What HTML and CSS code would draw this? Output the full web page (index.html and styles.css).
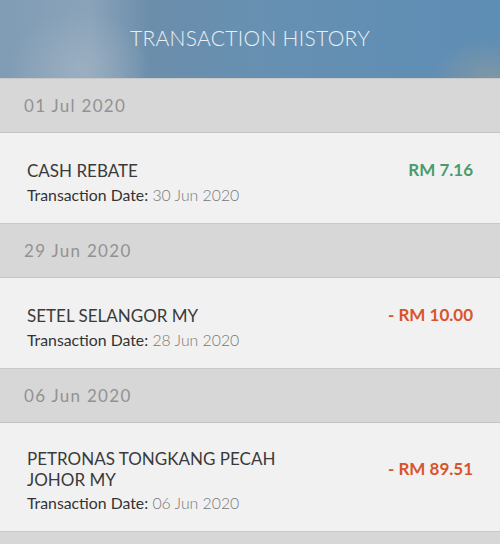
FILE: index.html
```html
<!DOCTYPE html>
<html lang="en">
<head>
    <meta charset="UTF-8">
    <meta name="viewport" content="width=device-width, initial-scale=1.0">
    <title>Transaction History</title>
    <link rel="stylesheet" href="styles.css">
</head>
<body>
<header class="top-bar">
    <h1>TRANSACTION HISTORY</h1>
</header>

<div class="history">
    <div class="day">01 Jul 2020</div>
    <div class="txn">
        <div class="txn-head">
            <div class="txn-title">CASH REBATE</div>
            <div class="amount credit">RM 7.16</div>
        </div>
        <div class="txn-date"><span>Transaction Date:</span> 30 Jun 2020</div>
    </div>

    <div class="day">29 Jun 2020</div>
    <div class="txn">
        <div class="txn-head">
            <div class="txn-title">SETEL SELANGOR MY</div>
            <div class="amount debit">- RM 10.00</div>
        </div>
        <div class="txn-date"><span>Transaction Date:</span> 28 Jun 2020</div>
    </div>

    <div class="day">06 Jun 2020</div>
    <div class="txn">
        <div class="txn-head">
            <div class="txn-title">PETRONAS TONGKANG PECAH JOHOR MY</div>
            <div class="amount debit">- RM 89.51</div>
        </div>
        <div class="txn-date"><span>Transaction Date:</span> 06 Jun 2020</div>
    </div>

    <div class="day"></div>
</div>
</body>
</html>
```

FILE: styles.css
```css
body {
    font-family: Lato, "Open Sans", sans-serif;
    background-color: #d7d7d7;
    margin: 0;
    padding: 0;
    height: 544px;
    overflow: hidden;
}

.top-bar {
    height: 78px;
    box-sizing: border-box;
    padding-bottom: 4px;
    display: flex;
    justify-content: center;
    align-items: center;
    background:
        radial-gradient(ellipse 70px 60px at 80px 70px, rgba(170, 185, 200, 0.55), rgba(170, 185, 200, 0)),
        radial-gradient(ellipse 60px 40px at 490px 78px, rgba(160, 160, 150, 0.5), rgba(160, 160, 150, 0)),
        linear-gradient(90deg, #7f9cb5 0%, #8aa3b9 18%, #6b8eab 30%, #6690b2 55%, #5e8db5 100%);
}

.top-bar h1 {
    margin: 0;
    font-weight: 300;
    font-size: 21px;
    color: #e9eff5;
    letter-spacing: 0.3px;
}

.day {
    height: 53px;
    padding: 0 24px;
    display: flex;
    align-items: center;
    background-color: #d7d7d7;
    border-top: 1px solid #c9c9c9;
    border-bottom: 1px solid #c4c4c4;
    color: #929292;
    font-size: 17px;
    letter-spacing: 1.3px;
}

.txn {
    background-color: #f1f1f1;
    padding: 25px 27px 18px 27px;
}

.txn-head {
    display: flex;
    justify-content: space-between;
    align-items: center;
}

.txn-title {
    width: 260px;
    color: #3a3a3a;
    font-size: 17px;
    line-height: 21px;
}

.txn-date {
    margin-top: 3px;
    color: #777;
    font-size: 15.8px;
    font-weight: 300;
    line-height: 20px;
}

.txn-date span {
    color: #333;
    font-weight: 400;
}

.amount {
    font-size: 17px;
    font-weight: 700;
    line-height: 24px;
}

.credit {
    color: #4b9a6b;
}

.debit {
    color: #d8552c;
}
```
